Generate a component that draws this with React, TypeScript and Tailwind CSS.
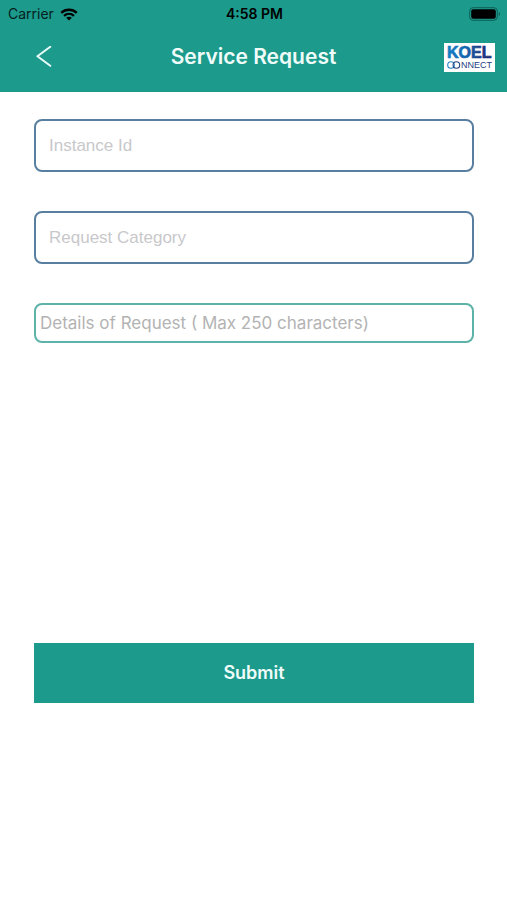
import { useState } from 'react';

function WifiIcon() {
  return (
    <svg viewBox="0 0 18 13" className="h-[13px] w-[18px]" fill="none" stroke="#000" aria-hidden="true">
      <path d="M1.2 4.9C5.6 0.7 12.4 0.7 16.8 4.9" strokeWidth="2.3" />
      <path d="M4 7.9C6.9 5.2 11.1 5.2 14 7.9" strokeWidth="2.2" />
      <path d="M9 12.6L6.2 9.8C7.8 8.4 10.2 8.4 11.8 9.8Z" fill="#000" stroke="none" />
    </svg>
  );
}

function BatteryIcon() {
  return (
    <svg viewBox="0 0 32 14" className="h-[14px] w-8" aria-hidden="true">
      <rect x="0.7" y="0.7" width="27.6" height="12.6" rx="3.4" fill="none" stroke="#0d5f55" strokeWidth="1" />
      <rect x="2.2" y="2.2" width="24.6" height="9.6" rx="2" fill="#000" />
      <path d="M29.8 5V9.2C31.4 8.6 31.4 5.6 29.8 5Z" fill="#0d5f55" />
    </svg>
  );
}

function KoelLogo() {
  return (
    <svg viewBox="0 0 51 29" className="h-[29px] w-[51px] bg-white" role="img" aria-label="KOEL Connect">
      <defs>
        <linearGradient id="koel" gradientUnits="userSpaceOnUse" x1="3" y1="0" x2="48" y2="0">
          <stop offset="0" stopColor="#1580c6" />
          <stop offset="0.4" stopColor="#1467ae" />
          <stop offset="0.75" stopColor="#1c3a82" />
          <stop offset="1" stopColor="#1c2c72" />
        </linearGradient>
      </defs>
      <text
        x="3"
        y="15"
        fill="url(#koel)"
        stroke="url(#koel)"
        strokeWidth="0.7"
        className="font-['Liberation_Sans'] text-[16px] font-bold"
      >
        KOEL
      </text>
      <circle cx="7" cy="22" r="3.3" fill="none" stroke="#2582c4" strokeWidth="1.1" />
      <circle cx="12.4" cy="22" r="3.3" fill="none" stroke="#25407f" strokeWidth="1.1" />
      <text x="17" y="25" fill="#25407f" className="font-['Liberation_Sans'] text-[9px]">
        NNECT
      </text>
    </svg>
  );
}

interface TextFieldProps {
  label: string;
  value: string;
  onChange: (value: string) => void;
}

function TextField({ label, value, onChange }: TextFieldProps) {
  return (
    <input
      type="text"
      aria-label={label}
      placeholder={label}
      value={value}
      onChange={(e) => onChange(e.target.value)}
      className="h-[53px] w-full rounded-lg border-2 border-[#587f9f] bg-white px-[13px] font-['Liberation_Sans',sans-serif] text-[17px] text-neutral-800 outline-none placeholder:text-[#c8c8cb]"
    />
  );
}

export default function App() {
  const [instanceId, setInstanceId] = useState('');
  const [category, setCategory] = useState('');
  const [details, setDetails] = useState('');

  return (
    <div className="min-h-screen bg-white font-['Inter',sans-serif]">
      <header className="bg-[#1c9a8b]">
        <div className="grid h-7 grid-cols-[1fr_auto_1fr] items-center pl-2 pr-1.5 text-sm text-[#06201d]">
          <div className="flex items-center gap-1.5">
            <span>Carrier</span>
            <WifiIcon />
          </div>
          <span className="font-semibold text-black">4:58 PM</span>
          <div className="flex justify-end">
            <BatteryIcon />
          </div>
        </div>
        <div className="grid h-16 grid-cols-[80px_1fr_80px] items-center pb-1.5">
          <button type="button" aria-label="Back" className="flex h-10 items-center pl-9">
            <svg viewBox="0 0 16 22" className="h-[22px] w-4" fill="none" stroke="#e9fbf8" strokeWidth="2" strokeLinecap="round" strokeLinejoin="round">
              <path d="M14.3 0.8L1.4 10.2L14.3 19.8" />
            </svg>
          </button>
          <h1 className="text-center text-[21px] font-semibold text-[#effcfa]">Service Request</h1>
          <div className="flex justify-end pr-3">
            <KoelLogo />
          </div>
        </div>
      </header>

      <form className="pl-[34px] pr-[33px] pt-[27px]" onSubmit={(e) => e.preventDefault()}>
        <div className="flex flex-col gap-[39px]">
          <TextField label="Instance Id" value={instanceId} onChange={setInstanceId} />
          <TextField label="Request Category" value={category} onChange={setCategory} />
          <textarea
            aria-label="Details of Request"
            placeholder="Details of Request ( Max 250 characters)"
            maxLength={250}
            value={details}
            onChange={(e) => setDetails(e.target.value)}
            className="block h-10 w-full resize-none overflow-hidden rounded-lg border-2 border-[#5db3a8] bg-white px-1 py-1.5 text-[17px] leading-6 text-neutral-800 outline-none placeholder:text-[#b3b3b3]"
          />
        </div>
        <button type="submit" className="mt-[300px] h-[60px] w-full bg-[#1c9a8b] text-lg font-semibold text-[#effcfa]">
          Submit
        </button>
      </form>
    </div>
  );
}
